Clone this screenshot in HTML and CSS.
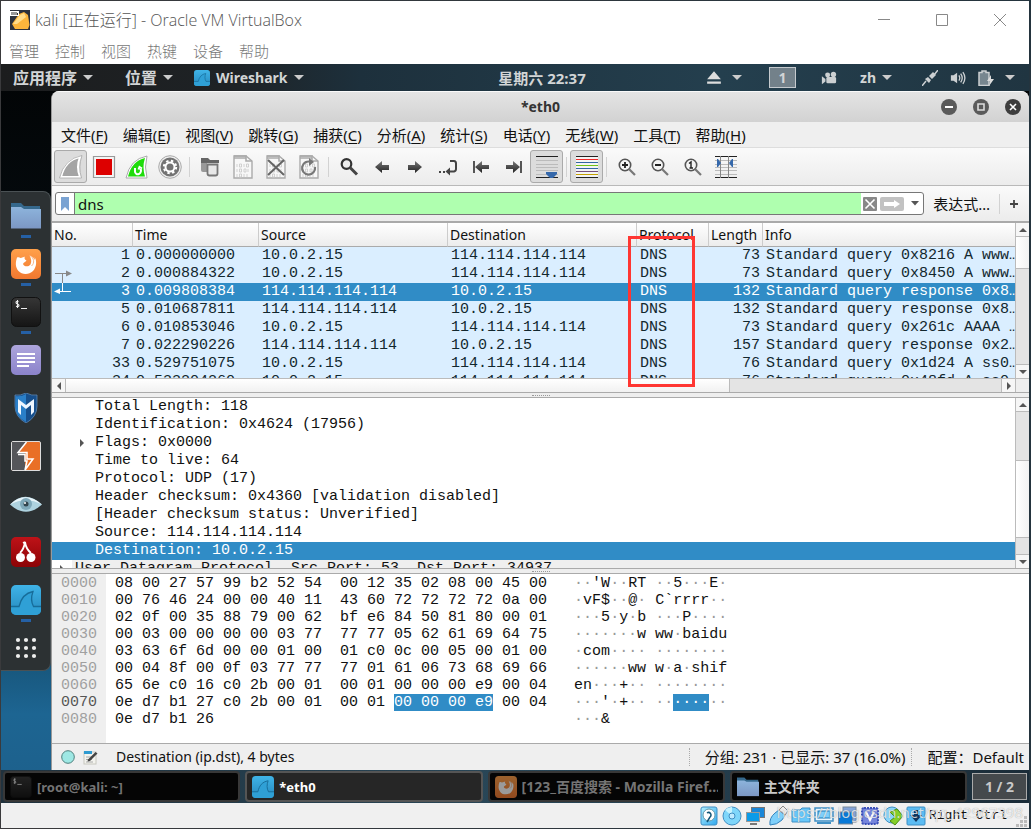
FILE: index.html
```html
<!DOCTYPE html>
<html lang="zh-CN">
<head>
<meta charset="utf-8">
<title>kali [正在运行] - Oracle VM VirtualBox</title>
<link rel="stylesheet" href="styles.css">
</head>
<body>
<svg class="defs" aria-hidden="true">
  <defs>
    <linearGradient id="gBlue" x1="0" y1="0" x2="0" y2="1"><stop offset="0" stop-color="#3fb4e8"/><stop offset="1" stop-color="#2688bd"/></linearGradient>
    <linearGradient id="gOrange" x1="0" y1="0" x2="0" y2="1"><stop offset="0" stop-color="#ffa04a"/><stop offset="1" stop-color="#f07830"/></linearGradient>
    <linearGradient id="gFolder" x1="0" y1="0" x2="0" y2="1"><stop offset="0" stop-color="#8db4dc"/><stop offset="1" stop-color="#7c97c4"/></linearGradient>
    <linearGradient id="gTerm" x1="0" y1="0" x2="0" y2="1"><stop offset="0" stop-color="#363636"/><stop offset="1" stop-color="#151515"/></linearGradient>
    <linearGradient id="gNote" x1="0" y1="0" x2="0" y2="1"><stop offset="0" stop-color="#ada5dc"/><stop offset="1" stop-color="#8b83cb"/></linearGradient>
    <linearGradient id="gRed" x1="0" y1="0" x2="0" y2="1"><stop offset="0" stop-color="#be1218"/><stop offset="1" stop-color="#8c0306"/></linearGradient>
    <linearGradient id="gArrow" x1="0" y1="0" x2="0" y2="1"><stop offset="0" stop-color="#777"/><stop offset="1" stop-color="#222"/></linearGradient>
    <linearGradient id="gSky" x1="0" y1="0" x2="1" y2="1"><stop offset="0" stop-color="#b4f0ff"/><stop offset="1" stop-color="#2fa8ee"/></linearGradient>
    <symbol id="shark" viewBox="0 0 30 30"><rect width="30" height="30" rx="5" fill="url(#gBlue)"/><path d="M0 21.500H8C10 13 14 8 22 6.500C20 12 20 17 22.500 21.500H30V25a5 5 0 0 1-5 5H5a5 5 0 0 1-5-5z" fill="#2fa0d6"/><path d="M0 21.500H8C10 13 14 8 22 6.500C20 12 20 17 22.500 21.500H30" fill="none" stroke="#176c99" stroke-width="1.300"/></symbol>
    <symbol id="fox" viewBox="0 0 30 30"><rect width="30" height="30" rx="5" fill="url(#gOrange)"/><path d="M6 8.500C7 8 8.500 8 9.500 9C11 8.500 13 8 14 7.500C13 9 13.500 10.500 15.500 11.500C14.500 13.500 12.500 13 12 15C13 17.500 17 18.500 19.500 15.500C21 12 20 9 18.500 6.500C22 8 23 9 23.500 11C24 10 24 9 23.500 8C26 11.500 25.800 18 22 22C18 26 11 26 7.500 22C4 18 4.500 13 6 8.500z" fill="#fff"/><path d="M19 6.500C23 9 24 14 20.500 17" fill="none" stroke="#f5a368" stroke-width=".8"/></symbol>
    <symbol id="folder" viewBox="0 0 30 27"><path d="M0 1H10L13 4H29V12H0z" fill="#35688c"/><path d="M0 5H10L13 7H30V26.500H0z" fill="url(#gFolder)"/></symbol>
    <symbol id="term" viewBox="0 0 30 30"><rect x=".5" y=".5" width="29" height="29" rx="5" fill="url(#gTerm)" stroke="#111"/><path d="M7.500 4.500Q5 4 5 5.500Q5 6.700 6.500 7Q8 7.300 8 8.500Q8 10 5 9.300M6.500 3V11M10 11.500H16" fill="none" stroke="#eee" stroke-width="1.100"/></symbol>
    <symbol id="mag" viewBox="0 0 20 20"><circle cx="8" cy="8" r="5.700" fill="#f4f4f4" stroke="#555" stroke-width="1.600"/><path d="M12 12L18 18" stroke="#777" stroke-width="2.200"/></symbol>
    <symbol id="doc" viewBox="0 0 24 24"><path d="M3 1H15L21 6V23H3z" fill="#f7f7f7" stroke="#aaa" stroke-width="1.400"/><path d="M3 1H15V6H21M3 3H15" fill="none" stroke="#aaa" stroke-width="1.600"/><path d="M6 9V12M8.500 9h2V12h-2zM13 9V12M15.500 9h2V12h-2zM6 14V17M8.500 14h2V17h-2zM13 14h2V17h-2zM17 14V17M6 19V22M8.500 19h2V22h-2zM13 19V22M16 19V22" fill="none" stroke="#ccc" stroke-width=".9"/></symbol>
    <symbol id="back" viewBox="0 0 20 20"><path d="M3 10L10 4V8H17V13H10V16z" fill="url(#gArrow)"/></symbol>
  </defs>
</svg>
<div class="vm">
  <header class="vm-title">
    <svg class="vm-logo" viewBox="0 0 20 20"><rect width="20" height="20" fill="#2b303b"/><path d="M9 4L14 2L18 5L19.500 15L18 19H5L2 14z" fill="#fbb53c"/><path d="M10 5L14 3L16 7L7 14L3 14z" fill="#ffdc8a"/><rect x="0" y="1" width="9" height="5" fill="#fff"/><path d="M2 2V5M4 2V5M6 2V5M7.500 3V5" stroke="#333"/></svg>
    <h1>kali [正在运行] - Oracle VM VirtualBox</h1>
    <div class="vm-controls">
      <button aria-label="最小化"><svg viewBox="0 0 14 14"><path d="M1 6.500H13"/></svg></button>
      <button aria-label="最大化"><svg viewBox="0 0 14 14"><path d="M1.500 1.500H12.500V12.500H1.500z"/></svg></button>
      <button aria-label="关闭"><svg viewBox="0 0 14 14"><path d="M1 1L13 13M13 1L1 13"/></svg></button>
    </div>
  </header>
  <nav class="vm-menu"><button>管理</button><button>控制</button><button>视图</button><button>热键</button><button>设备</button><button>帮助</button></nav>

  <div class="desktop">
    <div class="panel">
      <button class="caret cjk">应用程序</button>
      <button class="caret cjk places">位置</button>
      <button class="caret app"><svg viewBox="0 0 30 30"><use href="#shark"/></svg>Wireshark</button>
      <time class="clock">星期六 22:37</time>
      <div class="tray">
        <button class="caret eject" aria-label="弹出"><svg viewBox="0 0 14 14"><path d="M7 1L13 8H1zM1 10H13V12H1z" fill="#ddd"/></svg></button>
        <button class="ws">1</button>
        <button class="plain" aria-label="录屏"><svg viewBox="0 0 18 16"><circle cx="7.500" cy="4.500" r="2.800" fill="#ccd0d2"/><circle cx="14" cy="4" r="3" fill="#ccd0d2"/><rect x="6" y="7" width="11" height="7" rx="1.500" fill="#ccd0d2"/><path d="M1 6L5 9V12L1 15z" fill="#ccd0d2"/></svg></button>
        <button class="caret zh">zh</button>
        <button class="plain" aria-label="网络"><svg viewBox="0 0 16 16"><path d="M0 16L4 11M12 5L16 0" stroke="#ccd0d2" stroke-width="1.500"/><path d="M3 9L7 13L9 10L6 7zM7 6L10 9L14 5L11 2z" fill="#ccd0d2"/></svg></button>
        <button class="plain" aria-label="音量"><svg viewBox="0 0 18 16"><path d="M1 5H4L8 2V14L4 11H1z" fill="#ccd0d2"/><path d="M10 5Q12 8 10 11M12 3Q15.500 8 12 13M14.500 1.500Q19 8 14.500 14.500" fill="none" stroke="#ccd0d2" stroke-width="1.500"/></svg></button>
        <button class="caret power" aria-label="电源"><svg viewBox="0 0 16 16"><path d="M1 2.500H4V1H8V2.500H11V15.500H1z" fill="#77868f" stroke="#ccd0d2" stroke-width="1.500"/><path d="M13 5L9 11H12L11 16L16 9H13z" fill="#ddd"/></svg></button>
      </div>
    </div>

    <div class="workspace">
      <aside class="dock">
        <a href="#" class="run" aria-label="文件"><svg viewBox="0 0 30 30"><use href="#folder" y="1" height="27" width="30"/></svg></a>
        <a href="#" class="run" aria-label="Firefox"><svg viewBox="0 0 30 30"><use href="#fox"/></svg></a>
        <a href="#" class="run" aria-label="终端"><svg viewBox="0 0 30 30"><use href="#term"/></svg></a>
        <a href="#" aria-label="笔记"><svg viewBox="0 0 30 30"><rect width="30" height="30" rx="5" fill="url(#gNote)"/><path d="M6 9H24M6 13H24M6 17H24M6 21H18" stroke="#fff" stroke-width="2"/></svg></a>
        <a href="#" aria-label="Metasploit"><svg viewBox="0 0 30 30"><path d="M4 2Q9 3 15 0Q21 3 26 2V13Q26 24 15 30Q4 24 4 13z" fill="#174f8c" stroke="#5a86b4" stroke-width=".8"/><path d="M15 6V29Q4 23 4.500 13V3Q10 4 15 1z" fill="#2a7fc8"/><path d="M7 19V6L15 12L23 6V19L20 22V12L15 16L10 12V22z" fill="#eef6ff"/></svg></a>
        <a href="#" aria-label="Burp Suite"><svg viewBox="0 0 30 30"><rect x=".5" y=".5" width="29" height="29" rx="1.500" fill="#e96f26" stroke="#ddd"/><path d="M1 1H15.500L7 12H14V19L14 29H1z" fill="#55565a"/><path d="M15.500 1L7 11.500H16V18H22L14 29L16 20H14V13.500H7" fill="none" stroke="#fff" stroke-width="1.500"/></svg></a>
        <a href="#" aria-label="眼睛"><svg class="wide" viewBox="-1 0 32 30"><path d="M-1 15.500Q14 0 31 15.500Q15 30-1 15.500z" fill="#aed3e0"/><path d="M-1 15.500Q14 1 31 15.500Q15 7-1 15.500z" fill="#e9f5fa"/><circle cx="15" cy="15" r="6" fill="#7fa9ba"/><circle cx="15" cy="15" r="2.500" fill="#33454e"/><circle cx="14" cy="14" r="1" fill="#fff"/></svg></a>
        <a href="#" aria-label="CherryTree"><svg viewBox="0 0 30 30"><rect width="30" height="30" rx="5" fill="url(#gRed)"/><circle cx="9.500" cy="20.500" r="4.500" fill="#fff"/><circle cx="20" cy="20.500" r="4.500" fill="#fff"/><path d="M9 16Q13 12 14 5Q15 12 20 16M14 5L12 6" fill="none" stroke="#fff" stroke-width="1.800"/></svg></a>
        <a href="#" class="run" aria-label="Wireshark"><svg viewBox="0 0 30 30"><use href="#shark"/></svg></a>
        <a href="#" aria-label="显示应用程序"><svg viewBox="0 0 30 30" fill="#eee"><circle cx="7" cy="7" r="2.100"/><circle cx="15" cy="7" r="2.100"/><circle cx="23" cy="7" r="2.100"/><circle cx="7" cy="15" r="2.100"/><circle cx="15" cy="15" r="2.100"/><circle cx="23" cy="15" r="2.100"/><circle cx="7" cy="23" r="2.100"/><circle cx="15" cy="23" r="2.100"/><circle cx="23" cy="23" r="2.100"/></svg></a>
      </aside>

      <main class="window">
        <header class="win-title">
          <h2>*eth0</h2>
          <div class="win-controls">
            <button aria-label="最小化"><svg viewBox="0 0 16 16"><circle cx="8" cy="8" r="8" fill="#5a5a5a"/><path d="M4 8H12" stroke="#fff" stroke-width="2"/></svg></button>
            <button aria-label="最大化"><svg viewBox="0 0 16 16"><circle cx="8" cy="8" r="8" fill="#5a5a5a"/><path d="M5 5H11V11H5z" fill="none" stroke="#ddd" stroke-width="1.600"/></svg></button>
            <button aria-label="关闭"><svg viewBox="0 0 16 16"><circle cx="8" cy="8" r="8" fill="#3d3d3d"/><path d="M5 5L11 11M11 5L5 11" stroke="#fff" stroke-width="1.600"/></svg></button>
          </div>
        </header>
        <nav class="menu">
          <button>文件(<u>F</u>)</button><button>编辑(<u>E</u>)</button><button>视图(<u>V</u>)</button><button>跳转(<u>G</u>)</button><button>捕获(<u>C</u>)</button><button>分析(<u>A</u>)</button><button>统计(<u>S</u>)</button><button>电话(<u>Y</u>)</button><button>无线(<u>W</u>)</button><button>工具(<u>T</u>)</button><button>帮助(<u>H</u>)</button>
        </nav>
        <div class="toolbar">
          <button class="on" aria-label="开始捕获"><svg viewBox="0 0 24 24"><path d="M2 22Q6 5 21 2Q17 12 21 22z" fill="#a4a4a4" stroke="#fff" stroke-width="2"/><path d="M.5 23Q5 4 23 .5Q19 12 22.500 23z" fill="none" stroke="#aaa" stroke-width=".8"/></svg></button>
          <button aria-label="停止捕获"><svg viewBox="0 0 24 24"><path d="M1.500 1.500H22.500V22.500H1.500z" fill="#f4f4f4" stroke="#999" stroke-width="1.200"/><rect x="4" y="4" width="16" height="16" fill="#d00"/></svg></button>
          <button aria-label="重新开始"><svg viewBox="0 0 24 24"><path d="M1 23Q5 4 22 1Q19 12 22 23z" fill="#fff" stroke="#aaa"/><path d="M3 21.500Q7 6 20 3Q17 12 20 21.500z" fill="#1fdc0b"/><path d="M10 13V17Q11 20 14 19Q17 17 15.500 13.500M13.500 14.500L14.500 12L17 13.500" fill="none" stroke="#fff" stroke-width="2"/></svg></button>
          <button aria-label="捕获选项"><svg viewBox="0 0 24 24"><circle cx="12" cy="12" r="11.300" fill="#eee" stroke="#aaa"/><circle cx="12" cy="12" r="9.500" fill="#737373"/><circle cx="12" cy="12" r="4.500" fill="none" stroke="#fff" stroke-width="2"/><circle cx="12" cy="12" r="6.200" fill="none" stroke="#fff" stroke-width="2" stroke-dasharray="2.400 2.500"/></svg></button>
          <i class="sep"></i>
          <button aria-label="打开"><svg viewBox="0 0 24 24"><path d="M3 3H10L12 5H21V8H3z" fill="#666"/><path d="M3 8H9V17H5Q3 17 3 15z" fill="#999"/><path d="M9.500 9.500H19.500V18.500Q19.500 20.500 17.500 20.500H11.500Q9.500 20.500 9.500 18.500z" fill="#e8e8e8" stroke="#777" stroke-width="1.800"/></svg></button>
          <button aria-label="保存"><svg viewBox="0 0 24 24"><use href="#doc"/></svg></button>
          <button aria-label="关闭文件"><svg viewBox="0 0 24 24"><use href="#doc"/><path d="M4 5L20 20M20 5L4 20" stroke="#666" stroke-width="2"/></svg></button>
          <button aria-label="重新加载"><svg viewBox="0 0 24 24"><use href="#doc"/><path d="M18 12A6.500 6.500 0 1 1 14 7" fill="none" stroke="#777" stroke-width="2.200"/><path d="M12 3L17 7L12 11z" fill="#777"/></svg></button>
          <i class="sep"></i>
          <button aria-label="查找"><svg class="s20" viewBox="0 0 20 20"><circle cx="7.500" cy="7" r="4.800" fill="#eee" stroke="#333" stroke-width="2.200"/><path d="M11 10.500L18 17.500" stroke="#444" stroke-width="3"/></svg></button>
          <button aria-label="后退"><svg class="s20" viewBox="0 0 20 20"><use href="#back"/></svg></button>
          <button aria-label="前进"><svg class="s20" viewBox="0 0 20 20"><path d="M17 10L10 4V8H3V13H10V16z" fill="url(#gArrow)"/></svg></button>
          <button aria-label="转到分组"><svg class="s20" viewBox="0 0 20 20"><path d="M12 4H16Q18 4 18 6.500V12Q18 14 16 14.500H11" fill="none" stroke="#444" stroke-width="2"/><path d="M7.500 14.500L12 10.500V18.500zM1 14H3V16H1zM5 14H7V16H5z" fill="#444"/></svg></button>
          <button aria-label="首个分组"><svg class="s20" viewBox="0 0 20 20"><path d="M3 4V16" stroke="#444" stroke-width="1.800"/><path d="M4 10L11 4V8H18V12H11V16z" fill="url(#gArrow)"/></svg></button>
          <button aria-label="末尾分组"><svg class="s20" viewBox="0 0 20 20"><path d="M17 4V16" stroke="#444" stroke-width="1.800"/><path d="M16 10L9 4V8H2V12H9V16z" fill="url(#gArrow)"/></svg></button>
          <button class="on" aria-label="自动滚动"><svg viewBox="0 0 24 24"><path d="M1 1.500H23M1 22.500H23" stroke="#222"/><path d="M1 5.500H23M1 9.500H23M1 12.500H23M1 15.500H23M1 19.500H23" stroke="#bbb"/><path d="M11 17H22V19L18 23H15L11 19z" fill="#3568ab"/></svg></button>
          <i class="sep"></i>
          <button class="on" aria-label="着色"><svg viewBox="0 0 24 24"><rect x="1" y="1" width="22" height="22" fill="#f4f4f4"/><path d="M1 1.500H23M1 22.500H23" stroke="#222"/><path d="M1 4.500H23" stroke="#ef2929"/><path d="M1 7.500H23M1 13.500H23" stroke="#3465a4"/><path d="M1 10.500H23" stroke="#73c216"/><path d="M1 16.500H23" stroke="#75507b"/><path d="M1 19.500H23" stroke="#c4a000"/></svg></button>
          <i class="sep"></i>
          <button aria-label="放大"><svg class="s20" viewBox="0 0 20 20"><use href="#mag"/><path d="M8 5V11M5 8H11" stroke="#222" stroke-width="1.800"/></svg></button>
          <button aria-label="缩小"><svg class="s20" viewBox="0 0 20 20"><use href="#mag"/><path d="M5 8H11" stroke="#222" stroke-width="1.800"/></svg></button>
          <button aria-label="原始大小"><svg class="s20" viewBox="0 0 20 20"><use href="#mag"/><path d="M6 6.500L8 5V11M6.500 11H10" fill="none" stroke="#222" stroke-width="1.400"/></svg></button>
          <button aria-label="调整列宽"><svg viewBox="0 0 24 24"><path d="M1 1.500H23M1 22.500H23" stroke="#222"/><path d="M1 5.500H23M1 9.500H23M1 12.500H23M1 15.500H23M1 19.500H23" stroke="#bbb"/><path d="M6.500 1V23M14.500 1V23" stroke="#888"/><path d="M3 4H4L7 8L4 12H3zM19 4H18L15 8L18 12H19z" fill="#3568ab"/></svg></button>
        </div>
        <form class="filter">
          <div class="field">
            <button type="button" class="mark" aria-label="书签"><svg viewBox="0 0 10 14"><path d="M1 0H9V14L5 10L1 14z" fill="#7aa3d2"/></svg></button>
            <input type="text" value="dns" aria-label="显示过滤器">
            <button type="button" class="clear" aria-label="清除"><svg viewBox="0 0 14 14"><rect width="14" height="14" rx="1" fill="#888"/><path d="M2.500 2.500L11.500 11.500M11.500 2.500L2.500 11.500" stroke="#fff" stroke-width="1.600"/></svg></button>
            <button type="button" class="apply" aria-label="应用"><svg viewBox="0 0 24 14"><rect width="24" height="14" rx="2" fill="#c2c2c2"/><path d="M4 5H14V3L20 7L14 11V9H4z" fill="#fff"/></svg></button>
            <button type="button" class="drop" aria-label="历史"><svg viewBox="0 0 8 5"><path d="M0 0H8L4 4.500z" fill="#555"/></svg></button>
          </div>
          <button type="button" class="expr">表达式…</button>
          <i class="sep"></i>
          <button type="button" class="add" aria-label="添加"><svg viewBox="0 0 10 10"><path d="M5 1V9M1 5H9" stroke="#444" stroke-width="1.800"/></svg></button>
        </form>

        <section class="packets">
          <div class="pane">
            <div class="list">
              <table>
                <colgroup><col class="c-no"><col class="c-time"><col class="c-addr"><col class="c-addr"><col class="c-proto"><col class="c-len"><col></colgroup>
                <thead><tr><th>No.</th><th>Time</th><th>Source</th><th>Destination</th><th>Protocol</th><th>Length</th><th>Info</th></tr></thead>
                <tbody>
                  <tr><td>1</td><td>0.000000000</td><td>10.0.2.15</td><td>114.114.114.114</td><td>DNS</td><td>73</td><td>Standard query 0x8216 A www…</td></tr>
                  <tr><td>2</td><td>0.000884322</td><td>10.0.2.15</td><td>114.114.114.114</td><td>DNS</td><td>73</td><td>Standard query 0x8450 A www…</td></tr>
                  <tr class="sel"><td>3</td><td>0.009808384</td><td>114.114.114.114</td><td>10.0.2.15</td><td>DNS</td><td>132</td><td>Standard query response 0x8…</td></tr>
                  <tr><td>5</td><td>0.010687811</td><td>114.114.114.114</td><td>10.0.2.15</td><td>DNS</td><td>132</td><td>Standard query response 0x8…</td></tr>
                  <tr><td>6</td><td>0.010853046</td><td>10.0.2.15</td><td>114.114.114.114</td><td>DNS</td><td>73</td><td>Standard query 0x261c AAAA …</td></tr>
                  <tr><td>7</td><td>0.022290226</td><td>114.114.114.114</td><td>10.0.2.15</td><td>DNS</td><td>157</td><td>Standard query response 0x2…</td></tr>
                  <tr><td>33</td><td>0.529751075</td><td>10.0.2.15</td><td>114.114.114.114</td><td>DNS</td><td>76</td><td>Standard query 0x1d24 A ss0…</td></tr>
                  <tr><td>34</td><td>0.533204260</td><td>10.0.2.15</td><td>114.114.114.114</td><td>DNS</td><td>76</td><td>Standard query 0x48fd A ss0…</td></tr>
                </tbody>
              </table>
              <svg class="related" viewBox="0 0 18 24"><path d="M1 4.500H12M8.500 4.500V14" stroke="#888" fill="none"/><path d="M12 1.500L18 4.500L12 7.500z" fill="#888"/><path d="M5 22.500H17M8.500 14V22" stroke="#fff"/><path d="M6 19.500L0 22.500L6 25z" fill="#fff"/></svg>
            </div>
            <div class="vbar"><b class="up"></b><i class="thumb first"></i><b class="down"></b></div>
          </div>
          <div class="hbar"><b class="left"></b><i class="thumb"></i><b class="right"></b><span class="corner"></span></div>
          <div class="callout"></div>
        </section>
        <div class="grip"><i></i></div>

        <section class="details">
          <ul>
            <li>Total Length: 118</li>
            <li>Identification: 0x4624 (17956)</li>
            <li class="node">Flags: 0x0000</li>
            <li>Time to live: 64</li>
            <li>Protocol: UDP (17)</li>
            <li>Header checksum: 0x4360 [validation disabled]</li>
            <li>[Header checksum status: Unverified]</li>
            <li>Source: 114.114.114.114</li>
            <li class="sel">Destination: 10.0.2.15</li>
            <li class="node top">User Datagram Protocol, Src Port: 53, Dst Port: 34937</li>
          </ul>
          <div class="vbar"><b class="up"></b><i class="gap"></i><i class="thumb"></i><i class="rest"></i><b class="down"></b></div>
        </section>
        <div class="grip"><i></i></div>

        <section class="hex">
<pre class="offsets">0000
0010
0020
0030
0040
0050
0060
<b>0070</b>
0080</pre>
<pre class="bytes">08 00 27 57 99 b2 52 54  00 12 35 02 08 00 45 00
00 76 46 24 00 00 40 11  43 60 72 72 72 72 0a 00
02 0f 00 35 88 79 00 62  bf e6 84 50 81 80 00 01
00 03 00 00 00 00 03 77  77 77 05 62 61 69 64 75
03 63 6f 6d 00 00 01 00  01 c0 0c 00 05 00 01 00
00 04 8f 00 0f 03 77 77  77 01 61 06 73 68 69 66
65 6e c0 16 c0 2b 00 01  00 01 00 00 00 e9 00 04
0e d7 b1 27 c0 2b 00 01  00 01 <mark>00 00 00 e9</mark> 00 04
0e d7 b1 26</pre>
<pre class="ascii"><i>··</i>'W<i>··</i>RT <i>··</i>5<i>···</i>E<i>·</i>
<i>·</i>vF$<i>··</i>@<i>·</i> C`rrrr<i>··</i>
<i>···</i>5<i>·</i>y<i>·</i>b <i>···</i>P<i>····</i>
<i>·······</i>w ww<i>·</i>baidu
<i>·</i>com<i>····</i> <i>········</i>
<i>······</i>ww w<i>·</i>a<i>·</i>shif
en<i>···</i>+<i>··</i> <i>········</i>
<i>···</i>'<i>·</i>+<i>··</i> <i>··</i><mark>····</mark><i>··</i>
<i>···</i>&amp;</pre>
        </section>

        <footer class="status">
          <svg class="dot" viewBox="0 0 14 14"><circle cx="7" cy="7" r="6.300" fill="#9ee8e4" stroke="#4f7f7d"/></svg>
          <svg class="note" viewBox="0 0 15 15"><rect x="1" y="2" width="12" height="12" fill="#f3f3ee" stroke="#c8c8c0"/><rect x="1" y="1" width="8" height="3" fill="#2e9ad0"/><path d="M3 7H10M3 9.500H9M3 12H10" stroke="#aaa"/><path d="M5 9.500L12.500 2L14.500 3.500L7 11L4.500 11.500z" fill="#444"/></svg>
          <span class="msg">Destination (ip.dst), 4 bytes</span>
          <span class="cell">分组: 231 · 已显示: 37 (16.0%)</span>
          <span class="cell">配置：Default</span>
        </footer>
      </main>
    </div>

    <nav class="taskbar">
      <button class="dim latin"><svg viewBox="0 0 30 30"><use href="#term"/></svg><span>[root@kali: ~]</span></button>
      <button class="active latin"><svg viewBox="0 0 30 30"><use href="#shark"/></svg><span>*eth0</span></button>
      <button class="dim"><svg viewBox="0 0 30 30"><use href="#fox"/></svg><span>[123_百度搜索 - Mozilla Firef…</span></button>
      <button><svg viewBox="0 0 30 30"><use href="#folder" y="1" height="27" width="30"/></svg><span>主文件夹</span></button>
      <button class="pager">1 / 2</button>
    </nav>
  </div>

  <footer class="vm-status">
    <svg viewBox="0 0 20 20"><rect x="2" y="1" width="16" height="18" rx="2" fill="url(#gSky)" stroke="#3f8fc4"/><circle cx="10" cy="9" r="6" fill="#fff" stroke="#69a"/><path d="M8 7A2.500 2.500 0 1 1 11 11L8 16" fill="none" stroke="#157" stroke-width="1.500"/></svg>
    <svg viewBox="0 0 20 20"><circle cx="10" cy="10" r="9" fill="#7fd6fa" stroke="#3f8fc4"/><path d="M10 10L3 4A9 9 0 0 1 10 1z" fill="#c6f3ff"/><circle cx="10" cy="10" r="3" fill="#bfeaff" stroke="#3f8fc4"/></svg>
    <svg viewBox="0 0 20 20"><rect x="6.500" y="1.500" width="13" height="10" fill="#1b87d8" stroke="#777"/><rect x="1.500" y="6.500" width="13" height="9" fill="#0b9be8" stroke="#999"/><path d="M5 18H12" stroke="#777" stroke-width="2"/></svg>
    <svg viewBox="0 0 20 20"><path d="M2 19Q1 12 7 7L11 4L17 9L14 14Q9 19 2 19z" fill="#7fd0fb" stroke="#3584bd"/><path d="M11 4L15 0L20 5L17 9z" fill="#eee" stroke="#888"/></svg>
    <svg viewBox="0 0 20 20"><path d="M1 4H9L11 2H19V16H1z" fill="#68c8fa" stroke="#3f8fc4"/></svg>
    <svg viewBox="0 0 20 20"><path d="M1 2H19V15H1z" fill="#eaf7ff" stroke="#3f8fc4" stroke-width="1.500"/><rect x="4" y="5" width="12" height="7" fill="#7fd0fb" stroke="#1878b8"/><path d="M3 17H17" stroke="#3f8fc4" stroke-width="2"/></svg>
    <svg viewBox="0 0 20 20"><rect x="6" y="1" width="13" height="15" fill="#84a4d8" stroke="#789"/><rect x="1.500" y="6" width="14" height="12" fill="#0879d8" stroke="#789"/></svg>
    <svg viewBox="0 0 20 20"><rect x="2" y="2" width="16" height="16" rx="2" fill="#7585dc" stroke="#3a50b8" stroke-width="2" stroke-dasharray="2 1"/><path d="M6 6L10 14L14 6" fill="none" stroke="#fff" stroke-width="2"/></svg>
    <svg viewBox="0 0 20 20"><circle cx="9" cy="9" r="8" fill="#8bd6f8" stroke="#3f8fc4"/><path d="M7 6L14 3L20 10L12 19L7 15L12 11z" fill="#84cf28" stroke="#4c8c10"/></svg>
    <svg viewBox="0 0 20 20"><rect x="1" y="1" width="18" height="18" rx="1" fill="#5bbcf3" stroke="#3f8fc4"/><path d="M8 4H12V9H16L10 16L4 9H8z" fill="#11375e"/></svg>
    <span class="host-key">Right Ctrl</span>
    <svg class="resize" viewBox="0 0 12 12"><path d="M8 0H11V3H8zM4 4H7V7H4zM8 4H11V7H8zM0 8H3V11H0zM4 8H7V11H4zM8 8H11V11H8z" fill="#bbb"/></svg>
  </footer>
  <div class="watermark">https://blog.csdn.net/qq_42967398</div>
</div>
</body>
</html>
```
FILE: styles.css
```css
* { box-sizing: border-box; }
body {
  margin: 0;
  height: 100vh;
  background: linear-gradient(90deg, #3a3a3c, #24343e);
  font-family: "Noto Sans", "Noto Sans CJK SC", sans-serif;
  font-size: 14px;
  line-height: 18px;
  color: #111;
}
button, input {
  font: inherit;
  color: inherit;
  margin: 0;
  padding: 0;
  border: 0;
  background: none;
}
button { display: flex; align-items: center; justify-content: center; white-space: nowrap; }
svg { display: block; flex: none; }
.defs { position: absolute; width: 0; height: 0; }
h1, h2, pre, ul { margin: 0; padding: 0; }

.vm {
  position: relative;
  display: flex;
  flex-direction: column;
  height: 100%;
  padding: 1px 2px 1px 1px;
}

/* VirtualBox frame */
.vm-title {
  display: flex;
  align-items: center;
  gap: 5px;
  height: 37px;
  padding-left: 9px;
  background: #fff;
}
.vm-logo { width: 20px; height: 20px; }
.vm-title h1 {
  flex: 1;
  font: 300 16px/20px "Open Sans", "Noto Sans CJK SC", sans-serif;
  color: #555;
}
.vm-controls { display: flex; gap: 44px; padding-right: 22px; }
.vm-controls svg { width: 14px; height: 14px; fill: none; stroke: #888; }
.vm-menu {
  display: flex;
  gap: 16px;
  height: 26px;
  padding-left: 8px;
  background: #fff;
  font: 300 15px/26px "Noto Sans CJK SC", sans-serif;
  color: #777;
}
.vm-status {
  display: flex;
  align-items: center;
  justify-content: flex-end;
  gap: 3px;
  height: 25px;
  padding-right: 1px;
  background: #f0f0f0;
}
.vm-status svg { width: 20px; height: 20px; }
.vm-status .resize { width: 12px; height: 12px; align-self: flex-end; margin-left: 6px; }
.host-key { font: 13px/20px "Liberation Mono", monospace; }
.watermark {
  position: absolute;
  right: 8px;
  bottom: 7px;
  font-size: 15px;
  line-height: 20px;
  color: rgba(255, 255, 255, .75);
  text-shadow: 0 0 1px rgba(0, 0, 0, .35);
  pointer-events: none;
}

/* Guest desktop */
.desktop {
  flex: 1;
  min-height: 0;
  display: flex;
  flex-direction: column;
  background: linear-gradient(180deg, #020405 0, #04090c 18%, #10435f 72%, #1d6592 88%, #1d5f8a 100%);
}
.panel {
  position: relative;
  display: flex;
  align-items: center;
  height: 27px;
  padding: 0 14px 0 12px;
  background: linear-gradient(90deg, #1c1d1e 0, #1e2225 22%, #1d303c 35%, #243f4e 70%, #203541 100%);
  color: #d2d5d6;
  font-size: 14px;
  font-weight: 700;
}
.cjk { font-size: 16px; }
.caret::after {
  content: "";
  margin-left: 6px;
  border: 5px solid transparent;
  border-top-color: #ccc;
  border-bottom: 0;
}
.panel > .places { margin-left: 32px; }
.panel > .app { margin-left: 21px; }
.app svg { width: 16px; height: 16px; margin-right: 6px; }
.clock { position: absolute; left: 0; right: 0; margin: auto; width: max-content; padding-left: 54px; font-size: 15px; }
.tray { display: flex; align-items: center; margin-left: auto; }
.tray svg { width: 16px; height: 16px; }
.eject { margin-right: 27px; }
.eject::after { margin-left: 10px; }
.ws { width: 27px; height: 21px; margin-right: 25px; border: 1px solid #c5cace; background: #73818a; }
.zh { margin: 0 30px 0 23px; }
.tray .plain + .plain { margin-left: 12px; }
.power { margin-left: 12px; }
.power::after { margin-left: 11px; }

.workspace { flex: 1; min-height: 0; display: flex; align-items: stretch; }
.dock {
  display: flex;
  flex-direction: column;
  align-items: center;
  align-self: center;
  width: 50px;
  height: 480px;
  padding-top: 9px;
  border: 1px solid #4a5154;
  border-left: 0;
  border-radius: 0 8px 8px 0;
  background: #2c3133;
}
.dock a { display: flex; flex: none; flex-direction: column; height: 48px; align-items: center; }
.dock a:last-child { height: 36px; }
.dock svg { width: 30px; height: 30px; }
.dock .wide { width: 32px; }
.dock .run::after { content: ""; width: 10px; height: 3px; margin-top: 4px; background: #2560a5; }

/* Wireshark window */
.window {
  flex: 1;
  min-width: 0;
  display: flex;
  flex-direction: column;
  border-left: 1px solid #999;
  border-radius: 8px 8px 0 0;
  background: #efefef;
  overflow: hidden;
}
.win-title {
  display: grid;
  grid-template-columns: 1fr auto 1fr;
  align-items: center;
  height: 31px;
  border-top: 1px solid #fafafa;
  background: linear-gradient(#e4e4e4, #d2d2d2);
}
.win-title h2 { grid-column: 2; font-size: 14px; line-height: 18px; color: #333; }
.win-controls { display: flex; justify-content: flex-end; gap: 16px; padding-right: 8px; }
.win-controls svg { width: 16px; height: 16px; }
.menu { display: flex; gap: 15px; height: 25px; padding-left: 9px; font-size: 15px; }
.menu u { text-underline-offset: 2px; }
.toolbar {
  display: flex;
  align-items: center;
  height: 39px;
  padding-left: 2px;
  border-top: 1px solid #ddd;
  border-bottom: 1px solid #b9b9b9;
  background: linear-gradient(#fafafa, #ececec);
}
.toolbar button { width: 33px; height: 33px; }
.toolbar svg { width: 24px; height: 24px; }
.toolbar .s20 { width: 20px; height: 20px; }
.toolbar .on { border: 1px solid #aaa; border-radius: 3px; background: #dcdcdc; }
.sep { width: 1px; height: 20px; margin: 0 3px; background: #d2d2d2; }
.filter {
  display: flex;
  align-items: center;
  height: 35px;
  padding: 0 10px 0 3px;
  background: linear-gradient(#fafafa, #ececec);
}
.field {
  flex: 1;
  display: flex;
  align-items: stretch;
  height: 23px;
  border: 1px solid #777;
  border-radius: 3px;
  background: #fff;
  overflow: hidden;
}
.field input { flex: 1; min-width: 0; padding: 0 3px; border-left: 1px solid #777; background: #afffaf; outline: none; font-size: 15px; }
.mark { width: 18px; }
.mark svg { width: 10px; height: 14px; }
.clear svg { width: 14px; height: 14px; margin-left: 2px; }
.apply svg { width: 24px; height: 14px; margin-left: 3px; }
.drop { width: 19px; }
.drop svg { width: 8px; height: 5px; margin-left: 3px; }
.expr { margin: 0 6px 0 9px; font-size: 15px; }
.add { margin-left: 6px; }
.add svg { width: 10px; height: 10px; }

.packets { position: relative; border: solid #aaa; border-width: 2px 0 1px; }
.pane { display: flex; height: 155px; }
.list { position: relative; flex: 1; min-width: 0; overflow: hidden; background: #daeeff; }
.packets table { width: 100%; table-layout: fixed; border-collapse: separate; border-spacing: 0; }
.c-no { width: 80px; }
.c-time { width: 126px; }
.c-addr { width: 189px; }
.c-proto { width: 72px; }
.c-len { width: 54px; }
.packets th {
  height: 24px;
  padding: 0 2px;
  border-left: 1px solid #ccc;
  border-bottom: 1px solid #aaa;
  background: linear-gradient(#fff, #ececec);
  font-weight: 400;
  font-size: 14px;
  text-align: left;
  white-space: nowrap;
}
.packets th:first-child { border-left: 0; }
.packets td {
  height: 18px;
  padding: 0 3px 0 4px;
  font: 15px/18px "Liberation Mono", monospace;
  color: #12272e;
  white-space: nowrap;
  overflow: hidden;
}
.packets td:last-child { padding-right: 0; }
.packets td:nth-child(1), .packets td:nth-child(6) { text-align: right; padding: 0 2px; }
.packets .sel td { color: #fff; background: #308cc6; }
.related { position: absolute; left: 2px; top: 46px; width: 18px; height: 24px; overflow: visible; }
.callout { position: absolute; left: 576px; top: 13px; width: 67px; height: 151px; border: 3px solid #ff3632; }

.vbar { display: flex; flex-direction: column; width: 14px; border-left: 1px solid #bbb; background: #e4e4e4; }
.vbar b, .hbar b { display: grid; place-items: center; flex: none; background: #f6f6f6; }
.vbar b { height: 14px; }
.vbar b::after, .hbar b::after { content: ""; border: 4px solid transparent; }
.vbar .up { border-bottom: 1px solid #bbb; }
.vbar .up::after { border-bottom-color: #555; border-top: 0; }
.vbar .down { margin-top: auto; border-top: 1px solid #bbb; }
.vbar .down::after { border-top-color: #555; border-bottom: 0; }
.vbar .thumb { background: linear-gradient(90deg, #fff, #f2f2f2); border-bottom: 1px solid #bbb; }
.vbar .first { height: 32px; }
.hbar { display: flex; height: 14px; border-top: 1px solid #bbb; background: #e4e4e4; }
.hbar b { width: 14px; }
.hbar .left { border-right: 1px solid #bbb; }
.hbar .left::after { border-right-color: #555; border-left: 0; }
.hbar .right { margin-left: auto; border-left: 1px solid #bbb; }
.hbar .right::after { border-left-color: #555; border-right: 0; }
.hbar .thumb { width: 68%; border-right: 1px solid #bbb; background: linear-gradient(#fff, #f1f1f1); }
.corner { width: 14px; border-left: 1px solid #bbb; background: #eee; }
.grip { display: grid; place-items: center; height: 4px; background: #eee; }
.grip i { width: 18px; height: 0; border-top: 1px dotted #999; }

.details { display: flex; height: 172px; border: solid #aaa; border-width: 1px 0; background: #fff; }
.details ul { flex: 1; min-width: 0; overflow: hidden; list-style: none; font: 15px/18px "Liberation Mono", monospace; }
.details li { padding-left: 43px; white-space: pre; position: relative; }
.details .sel { color: #fff; background: #308cc6; }
.details .top { padding-left: 23px; background: linear-gradient(90deg, #fff 20px, #efefef 20px); }
.node::before {
  content: "";
  position: absolute;
  left: 28px;
  top: 5px;
  border: 4px solid transparent;
  border-left-color: #555;
  border-right: 0;
}
.details .top::before { left: 8px; }
.details .gap { height: 49px; border-bottom: 1px solid #bbb; }
.details .thumb { height: 77px; }

.hex { flex: 1; min-height: 0; display: flex; gap: 27px; border: solid #aaa; border-width: 1px 0; background: #fff; overflow: hidden; }
.hex pre { padding-top: 1px; font: 15px/17px "Liberation Mono", monospace; }
.hex .offsets { width: 54px; padding-left: 9px; margin-right: -18px; background: #efefef; color: #a0a0a0; }
.offsets b { font-weight: 400; color: #555; }
.hex mark { background: #308cc6; color: #fff; }
.ascii i { font-style: normal; color: #999; }

.status { display: flex; align-items: center; height: 26px; padding-left: 9px; font-size: 14px; }
.dot { width: 14px; height: 14px; }
.note { width: 15px; height: 15px; margin: 0 18px 0 8px; }
.msg { flex: 1; }
.cell { padding: 0 3px 0 15px; border-left: 1px dotted #aaa; margin-left: 3px; font-size: 15px; }
.cell:last-child { padding-right: 5px; }

.taskbar {
  display: flex;
  gap: 5px;
  height: 33px;
  padding: 1px 2px 1px 2px;
  background: linear-gradient(90deg, #20323e, #294758 50%, #1b2c38);
  font-weight: 700;
}
.taskbar button {
  flex: 1;
  min-width: 0;
  justify-content: flex-start;
  gap: 5px;
  padding: 0 5px;
  border: 2px solid #383838;
  border-radius: 4px;
  background: #050505;
  color: #c9c9c9;
}
.taskbar svg { width: 22px; height: 22px; }
.taskbar span { overflow: hidden; }
.taskbar .latin { font-size: 13px; }
.taskbar .dim { color: #747474; }
.taskbar .dim svg { opacity: .6; }
.taskbar .active { background: #262626; border-color: #555; color: #fff; }
.taskbar .pager { flex: none; width: 55px; justify-content: center; margin: 2px 0; border: 1px solid #aaa; border-radius: 0; background: #45494c; }
```
